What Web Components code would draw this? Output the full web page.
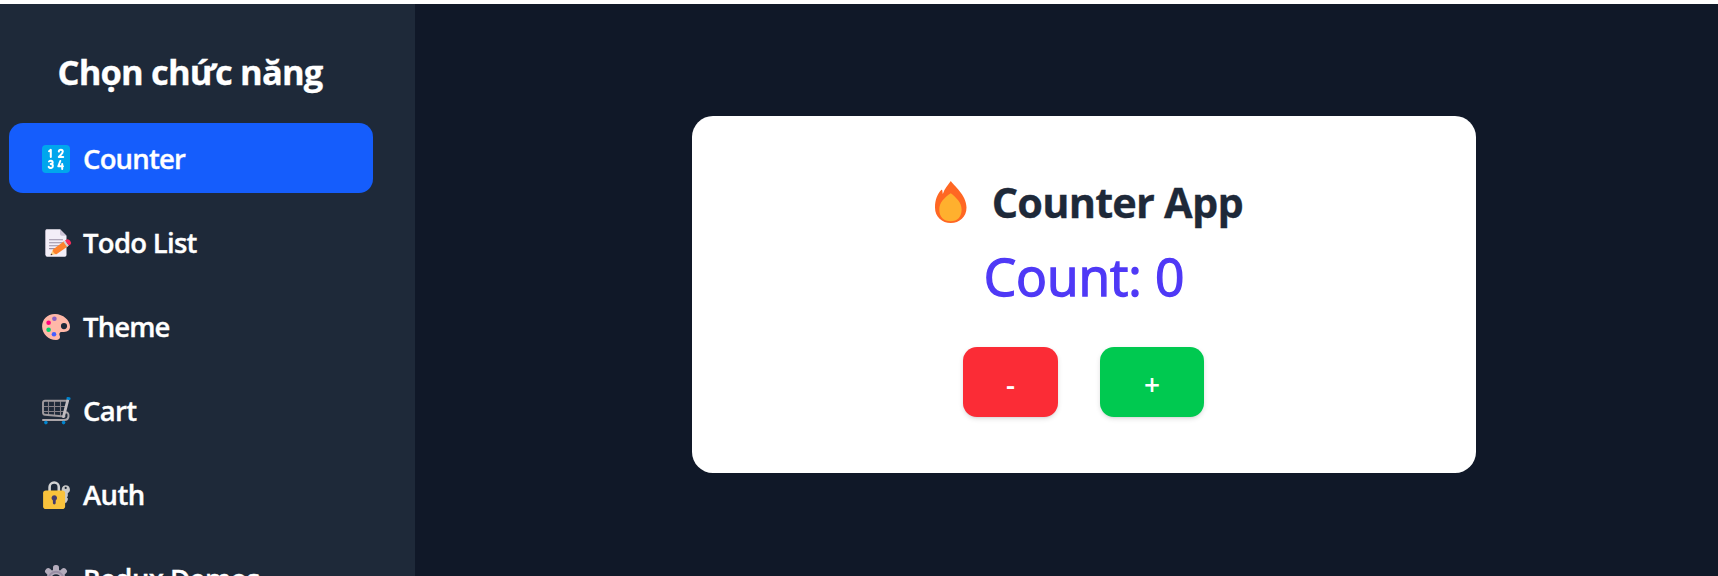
<!DOCTYPE html>
<html lang="vi">
<head>
<meta charset="utf-8">
<title>Counter App</title>
<style>
html,body{margin:0;height:100%;overflow:hidden}
body{background:#fff;font-family:"Open Sans","Noto Sans",sans-serif;color:#fff}
</style>
</head>
<body>
<app-shell>
  <side-nav slot="nav" heading="Chọn chức năng">
    <nav-item icon="numbers" active style="--track:-.8px">Counter</nav-item>
    <nav-item icon="memo" style="--track:-.72px">Todo List</nav-item>
    <nav-item icon="palette" style="--track:-.9px">Theme</nav-item>
    <nav-item icon="cart" style="--track:-.7px">Cart</nav-item>
    <nav-item icon="lock" style="--track:-.6px">Auth</nav-item>
    <nav-item icon="gear" style="--track:-.55px">Redux Demos</nav-item>
  </side-nav>
  <counter-card></counter-card>
</app-shell>

<script>
const ICONS = {
  numbers: `<rect width="28" height="28" rx="4" fill="#00a6ed"/><g fill="none" stroke="#fff" stroke-width="2" stroke-linecap="round" stroke-linejoin="round"><path d="M7 6.2 8.800 4.800V12"/><path d="M16.800 6.600c.2-2.600 4-2.600 4 0 0 1.800-1.500 2.700-4 5.400h4.400"/><path d="M7 16.500c1-1.300 3.700-1.100 3.700.8 0 1.200-.9 1.700-2 1.700 1.300 0 2.200.7 2.200 2 0 2.300-3.200 2.500-4.200.9"/><path d="M18.300 16l-2 5.300H21M20.200 19v5"/></g>`,
  memo: `<path d="M3.500 2Q3.500.3 5.200.3H18l6.500 6.500V26q0 1.800-1.800 1.800H5.200q-1.700 0-1.700-1.800z" fill="#f3eef8"/><path d="M3.500 26V2Q3.500.3 5.200.3" fill="none" stroke="#cdc4d6" stroke-width=".6"/><path d="M18 .3V5q0 1.800 1.800 1.800h4.700z" fill="#cdc4d6"/><path d="M7.500 10.800h13M7.500 13.800h13M7.500 16.800h10M7.500 19.600h6" stroke="#998ea4" stroke-width="1.100" stroke-linecap="round"/><path d="m11 20.500-2.200 4.600q-.5 1.300 1 1l5-1z" fill="#ffce7c"/><path d="m9.200 24.400-.4.900q-.4 1 .7.800l1.100-.2z" fill="#402a32"/><path d="M11 20.500 22 12.300l4 5-11.200 7.800q-1.500.7-3-1.300t-.8-3.300z" fill="#ff822d"/><path d="m21.300 12.800 1.700-1.300 4 5-1.900 1.400z" fill="#d3d3d3"/><path d="m23 11.500 1.500-1q2-1 3.700 1.200t.3 3.700l-1.700 1.200z" fill="#fa2b5b"/>`,
  palette: `<path fill-rule="evenodd" d="M13.200 1C5.200.8 0 6.500.1 13.500.2 21 6.500 27 14 27c2.800 0 4.200-1.500 4-3.300-.1-1.100-.8-1.900-.6-3 .4-2 2-1.900 4-1.700 4.500.2 6.600-2.300 6.600-5.200C28 7 21 1.200 13.200 1zM22 10a3.100 3.100 0 1 1 0 6.200A3.100 3.100 0 0 1 22 10z" fill="#ffb8a8"/><circle cx="12.400" cy="5.800" r="2.300" fill="#8b62c4"/><circle cx="6.600" cy="9.800" r="2.300" fill="#ff007f"/><circle cx="6.600" cy="16.700" r="2.300" fill="#00d26a"/><circle cx="12" cy="21.200" r="2.300" fill="#455dff"/>`,
  cart: `<g fill="none" stroke-linejoin="round" stroke-linecap="round"><path d="M6.500 4.500v13.500M12.500 4.500v14M18.500 4.500v14M2 9.500h21.500M2 14.500h20" stroke="#858087" stroke-width="1.100"/><path d="M25.500 3.700H3Q1 3.700 1 5.800v9.600q0 2.200 2 2.400l19.500 1.700" stroke="#a09b9f" stroke-width="1.900"/><path d="M23.500 15.300q3.200 0 3 3.800-.2 3.900-4.500 3.900H1" stroke="#aaa5a9" stroke-width="2"/><path d="m25.700 3.500-4.200 16" stroke="#c1bcc0" stroke-width="2.900"/><path d="m25.800 1.400 1.400.3" stroke="#0084ce" stroke-width="2.800"/></g><g fill="#0084ce"><circle cx="3.900" cy="25.600" r="1.800"/><circle cx="21.600" cy="25.600" r="1.800"/></g>`,
  lock: `<path d="M7.600 11V6.100a4.600 4.600 0 0 1 9.200 0V11" fill="none" stroke="#d3d3d3" stroke-width="2.600"/><path fill-rule="evenodd" d="M23.700 4.300a4.300 4.300 0 0 1 2.100 8v2.900l-1 1 1 1v1.700l-1.900 3.400-2.100-2V12.300a4.300 4.300 0 0 1 1.900-8zm0 1.500a1.100 1.100 0 1 0 0 2.200 1.100 1.100 0 0 0 0-2.200z" fill="#c9c9c9"/><rect x="1.100" y="9.400" width="22" height="18.600" rx="2.800" fill="#f9c23c"/><path d="M12.300 14.200a2.800 2.800 0 0 0-1.400 5.200V22q0 1.400 1.400 1.400t1.400-1.400v-2.600a2.800 2.800 0 0 0-1.400-5.200z" fill="#433b6b"/>`,
  gear: `<g fill="#b4acbc"><rect x="11" y="0" width="6" height="28" rx="2.600"/><rect x="11" y="0" width="6" height="28" rx="2.600" transform="rotate(45 14 14)"/><rect x="11" y="0" width="6" height="28" rx="2.600" transform="rotate(90 14 14)"/><rect x="11" y="0" width="6" height="28" rx="2.600" transform="rotate(135 14 14)"/><circle cx="14" cy="14" r="9.500"/></g><circle cx="14" cy="14" r="7.300" fill="none" stroke="#998ea4" stroke-width="2"/><circle cx="14" cy="14" r="4.800" fill="#1e2939"/>`,
  fire: `<path d="M15.800 0C18 3.800 31.500 14 31.500 26.500 31.500 36 24.500 42 15.800 42S0 36 0 26.500C0 18.500 2.500 13 6.200 9c.6-.5 1-.3 1.100.4L7.800 13C9.600 7.500 12.500 4.800 15.800 0z" fill="#ff6723"/><path d="M15.800 12.300C21 16.500 26.600 21.500 26.600 28.500 26.600 36 22.500 40.200 15.600 40.200S4.300 36 4.300 28.500c0-7 5.200-12 11.500-16.200z" fill="#ffb02e"/>`
};

function define(name, html, setup) {
  const template = document.createElement('template');
  template.innerHTML = html;
  customElements.define(name, class extends HTMLElement {
    static observedAttributes = ['name', 'icon', 'heading'];
    constructor() {
      super();
      this.attachShadow({ mode: 'open' }).append(template.content.cloneNode(true));
      if (setup) setup.call(this, this.shadowRoot);
    }
    attributeChangedCallback(attribute, before, value) {
      if (this.render) this.render(value);
    }
  });
}

define('emoji-icon', `<style>
  :host{display:block;flex:none;width:28px;height:28px}
  svg{display:block;width:100%;height:100%;overflow:visible}
</style><svg aria-hidden="true"></svg>`, function (root) {
  this.render = name => {
    const svg = root.querySelector('svg');
    svg.setAttribute('viewBox', name === 'fire' ? '0 0 31.5 42' : '0 0 28 28');
    svg.innerHTML = ICONS[name];
  };
});

define('nav-item', `<style>
  :host{display:flex;align-items:center;gap:13px;box-sizing:border-box;height:70px;padding:0 33px;border-radius:14px;
    font-size:27.5px;font-weight:600;line-height:42px;white-space:nowrap;letter-spacing:var(--track,0);cursor:pointer}
  :host([active]){background:#155dfc}
  emoji-icon{margin-top:2px}
  span{padding-top:1.5px;-webkit-text-stroke:.35px #fff}
</style><emoji-icon></emoji-icon><span><slot></slot></span>`, function (root) {
  this.render = icon => root.querySelector('emoji-icon').setAttribute('name', icon);
});

define('side-nav', `<style>
  :host{display:block;box-sizing:border-box;width:415px;padding:43px 42px 0 9px;background:#1e2939;overflow:hidden}
  h2{margin:0 2px 27px 0;font-size:34.5px;font-weight:700;line-height:49px;text-align:center;letter-spacing:-.85px;white-space:nowrap;-webkit-text-stroke:.3px #fff}
  nav{display:grid;gap:14px}
</style><h2></h2><nav><slot></slot></nav>`, function (root) {
  this.render = heading => { root.querySelector('h2').textContent = heading; };
});

define('count-button', `<style>
  :host{display:block}
  button{display:block;width:var(--w);height:70px;border:0;padding:4px 0 0 1px;border-radius:14px;background:var(--bg);color:#fff;
    font:600 28px/66px "Open Sans",sans-serif;box-shadow:0 2px 5px rgba(0,0,0,.12),0 2px 3px -2px rgba(0,0,0,.12)}
</style><button><slot></slot></button>`);

define('counter-card', `<style>
  :host{display:flex;flex-direction:column;align-items:center;box-sizing:border-box;width:784px;height:357px;padding-top:56px;border-radius:21px;background:#fff}
  h1{display:flex;align-items:center;gap:25px;margin:0 0 0 10px;height:60px;font-size:41.5px;font-weight:700;line-height:60px;letter-spacing:-.8px;color:#1e2939;-webkit-text-stroke:.3px #1e2939;white-space:nowrap}
  emoji-icon{width:31.5px;height:42px;-webkit-text-stroke:0}
  p{margin:13px 0 0;font-size:51.5px;line-height:63px;font-weight:400;-webkit-text-stroke:1.4px #4f39f6;letter-spacing:-.1px;color:#4f39f6;white-space:nowrap}
  .row{display:flex;gap:42px;margin:39px 2px 0 0}
</style>
<h1><emoji-icon name="fire"></emoji-icon><span>Counter App</span></h1>
<p>Count: <span class="v">0</span></p>
<div class="row"><count-button class="dec" style="--w:95px;--bg:#fb2c36">-</count-button><count-button class="inc" style="--w:104px;--bg:#00c950">+</count-button></div>`, function (root) {
  const value = root.querySelector('.v');
  const step = d => () => { value.textContent = Number(value.textContent) + d; };
  root.querySelector('.dec').addEventListener('click', step(-1));
  root.querySelector('.inc').addEventListener('click', step(1));
});

define('app-shell', `<style>
  :host{display:flex;box-sizing:border-box;height:100vh;border-top:4px solid #fff;background:#101828;overflow:hidden}
  main{flex:1;display:flex;justify-content:center;align-items:flex-start;padding:112px 0 0 35px}
  ::slotted(side-nav){flex:none}
</style><slot name="nav"></slot><main><slot></slot></main>`);
</script>
</body>
</html>
